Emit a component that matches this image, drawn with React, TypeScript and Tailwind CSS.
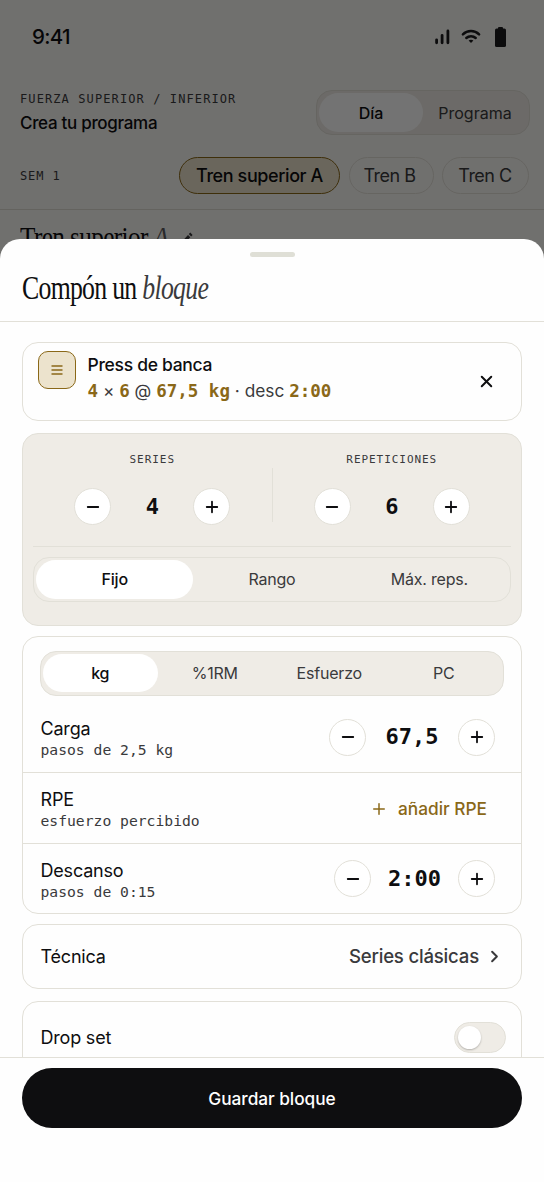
import { clsx } from 'clsx';
import { Minus, Plus, X, ChevronRight } from 'lucide-react';

const mono = "font-['DejaVu_Sans_Mono',monospace]";
const serif = "font-['Liberation_Serif',serif]";

const StatusIcons = () => {
  return (
    <div className="flex items-center">
      <svg width="15" height="16" viewBox="0 0 15 16" stroke="#1c1c1e" strokeWidth="2.8" strokeLinecap="round">
        <path d="M1.6 10.8v3M7.1 6.3v7.5M12.9 2v11.8" />
      </svg>
      <svg className="ml-[11px]" width="20" height="15" viewBox="0 0 20 15" fill="none" stroke="#1c1c1e" strokeWidth="2.5" strokeLinecap="round">
        <path d="M1.9 5.4C6.3 1 13.7 1 18.1 5.4M5.3 9C7.9 6.5 12.1 6.5 14.7 9" />
        <path d="M7.6 11.6c1.4-1.2 3.4-1.2 4.8 0L10 14z" fill="#1c1c1e" stroke="none" />
      </svg>
      <svg className="ml-[14px]" width="11" height="20" viewBox="0 0 11 20" fill="#1c1c1e">
        <rect x="3" width="5" height="4" rx="1" />
        <rect y="1.6" width="11" height="18.4" rx="1.6" />
      </svg>
    </div>
  );
};

interface SegmentedProps {
  items: string[];
  className?: string;
}

const Segmented = ({ items, className }: SegmentedProps) => {
  return (
    <div className={clsx('flex rounded-2xl border border-[#e2e0d8] bg-[#efece6] text-[16px] tracking-[-0.2px]', className)}>
      {items.map((item, i) => (
        <button
          key={item}
          className={clsx(
            'flex-1 rounded-[20px] pb-px',
            i === 0 ? 'bg-white font-medium text-[#0e0e10]' : 'text-[#3a3a3c]'
          )}
        >
          {item}
        </button>
      ))}
    </div>
  );
};

interface StepperProps {
  value: string;
  valueClass: string;
}

const Stepper = ({ value, valueClass }: StepperProps) => {
  const round = 'flex size-[37px] items-center justify-center rounded-full border border-[#e2e0d8] bg-white';
  return (
    <div className="flex items-center">
      <button className={round}>
        <Minus size={18} strokeWidth={2.4} />
      </button>
      <span className={clsx(mono, 'text-center text-[22px] leading-none font-bold', valueClass)}>{value}</span>
      <button className={round}>
        <Plus size={18} strokeWidth={2.4} />
      </button>
    </div>
  );
};

interface RowProps {
  title: string;
  hint: string;
  children: React.ReactNode;
}

const Row = ({ title, hint, children }: RowProps) => {
  return (
    <div className="flex h-[70.5px] items-center justify-between pr-[26px] pl-[17.5px]">
      <div className="pt-[4px]">
        <div className="text-[18px] leading-[22px] tracking-[-0.2px]">{title}</div>
        <div className={clsx(mono, 'text-[14.7px] leading-5 text-[#3a3a3c]')}>{hint}</div>
      </div>
      {children}
    </div>
  );
};

const ProgramHeader = () => {
  const pill = 'flex h-[37px] items-center justify-center rounded-full border text-[18px]';
  return (
    <div className="h-full bg-[#f9f8f4]">
      <div className="flex h-[73px] items-center justify-between pr-[38px] pl-8">
        <span className="pt-px text-[20.5px] font-medium tracking-[-0.7px]">9:41</span>
        <StatusIcons />
      </div>
      <div className="flex items-center justify-between pt-[17px] pr-[14px] pl-5">
        <div>
          <div className={clsx(mono, 'text-[12px] leading-4 tracking-[1.1px] text-[#3a3a3c]')}>
            FUERZA SUPERIOR / INFERIOR
          </div>
          <div className="mt-1 text-[17px] leading-6 font-medium tracking-[-0.3px]">Crea tu programa</div>
        </div>
        <div className="flex h-[45px] w-[214px] rounded-2xl border border-[#e2e0d8] bg-[#efece6] p-[2px] text-[16px]">
          <span className="flex w-[104px] items-center justify-center rounded-[20px] bg-white font-medium">Día</span>
          <span className="flex flex-1 items-center justify-center text-[#3a3a3c]">Programa</span>
        </div>
      </div>
      <div className="flex h-[75px] items-center border-b border-[#dddbd3] pt-[7px] pr-[15px] pl-5">
        <span className={clsx(mono, 'flex-1 text-[12px] tracking-[0.9px] text-[#3a3a3c]')}>SEM 1</span>
        <span className={clsx(pill, 'w-[161px] border-[#8a6818] bg-[#ece3cd] font-medium tracking-[-0.4px]')}>Tren superior A</span>
        <span className={clsx(pill, 'ml-[9px] w-[85px] border-[#e2e0d8] pr-1 tracking-[-0.5px] text-[#3a3a3c]')}>Tren B</span>
        <span className={clsx(pill, 'ml-2 w-[87px] border-[#e2e0d8] pr-px tracking-[-0.5px] text-[#3a3a3c]')}>Tren C</span>
      </div>
      <div className="flex items-start pt-[6px] pl-5">
        <h1 className={clsx(serif, 'w-[162px] origin-left scale-x-[0.87] text-[29px] tracking-[-0.7px] whitespace-nowrap')}>
          Tren superior <em className="text-[#5c5c5e]">A</em>
        </h1>
        <svg className="mt-[15px]" width="11" height="13" viewBox="0 0 11 13" fill="#3a3a3c">
          <path d="M0 10.4 6 3.9l2.3 2.3L2.3 12.7H0zM6.8 3.1 8.3 1.6 10.6 3.9 9.1 5.4z" />
        </svg>
      </div>
    </div>
  );
};

const ExerciseCard = () => {
  const gold = clsx(mono, 'text-[17.5px] font-bold text-[#8a6818]');
  return (
    <section className="flex h-[79px] rounded-2xl border border-[#e2e0d8] pr-[25px] pl-[15px]">
      <div className="mt-2 flex size-[38px] items-center justify-center rounded-[10px] border border-[#8a6818] bg-[#ece3cd]">
        <svg width="12" height="10" viewBox="0 0 12 10" stroke="#8a6818" strokeWidth="1.5">
          <path d="M0.5 1h11M0.5 5h11M0.5 9h11" />
        </svg>
      </div>
      <div className="ml-[11.5px] flex-1 pt-[9px]">
        <div className="text-[17.5px] leading-[26px] font-medium tracking-[-0.3px]">Press de banca</div>
        <div className="flex h-[26px] items-center text-[17.3px] whitespace-pre text-[#3a3a3c]">
          <b className={gold}>4</b> × <b className={gold}>6</b> @ <b className={gold}>67,5 kg</b> · desc{' '}
          <b className={gold}>2:00</b>
        </div>
      </div>
      <button>
        <X size={19} strokeWidth={2.5} />
      </button>
    </section>
  );
};

const VolumeCard = () => {
  const label = clsx(mono, 'text-[11px] leading-4 tracking-[0.95px] text-[#3a3a3c]');
  return (
    <section className="mt-3 h-[193px] rounded-2xl border border-[#e2e0d8] bg-[#efece6] px-[10px]">
      <div className="flex h-[113px] items-start border-b border-[#e2e0d8] pt-[18px]">
        <div className="flex flex-1 flex-col items-center gap-[20px]">
          <span className={label}>SERIES</span>
          <Stepper value="4" valueClass="w-[82px]" />
        </div>
        <div className="mt-4 h-[54px] w-px bg-[#e2e0d8]" />
        <div className="flex flex-1 flex-col items-center gap-[20px]">
          <span className={label}>REPETICIONES</span>
          <Stepper value="6" valueClass="w-[82px]" />
        </div>
      </div>
      <Segmented className="mt-[10px] h-[45px] p-[2px] pb-[2.5px]" items={['Fijo', 'Rango', 'Máx. reps.']} />
    </section>
  );
};

const LoadCard = () => {
  return (
    <section className="mt-[10px] h-[278px] rounded-2xl border border-[#e2e0d8] pt-[14px]">
      <Segmented className="mx-[17px] h-[45px] p-[2px] pb-[3px]" items={['kg', '%1RM', 'Esfuerzo', 'PC']} />
      <div className="mt-[6.5px] divide-y divide-[#e2e0d8]">
        <Row title="Carga" hint="pasos de 2,5 kg">
          <Stepper value="67,5" valueClass="w-[92px]" />
        </Row>
        <Row title="RPE" hint="esfuerzo percibido">
          <button className="flex items-center gap-[10px] pt-[2px] pr-2 text-[17.3px] font-medium text-[#8a6818]">
            <Plus size={18} strokeWidth={2} />
            añadir RPE
          </button>
        </Row>
        <Row title="Descanso" hint="pasos de 0:15">
          <Stepper value="2:00" valueClass="w-[87px]" />
        </Row>
      </div>
    </section>
  );
};

const App = () => {
  return (
    <div className="relative h-[1182px] w-[544px] overflow-hidden font-['Inter',sans-serif] text-[#0e0e10]">
      <ProgramHeader />
      <div className="absolute inset-0 bg-black/55" />
      <div className="absolute inset-x-0 top-[239px] bottom-0 flex flex-col rounded-t-[20px] bg-[#fefefe]">
        <div className="mx-auto mt-[13px] h-[5px] w-[45px] rounded-full bg-[#dfdfd6]" />
        <header className="h-[65px] border-b border-[#e2e0d8] pt-[10px] pl-[22px]">
          <h2 className={clsx(serif, 'origin-left scale-x-[0.78] text-[33px] leading-[42px] tracking-[-0.9px] whitespace-nowrap')}>
            Compón un <em className="text-[#3a3a3c]">bloque</em>
          </h2>
        </header>
        <main className="min-h-0 flex-1 overflow-hidden px-[22px] pt-5">
          <ExerciseCard />
          <VolumeCard />
          <LoadCard />
          <section className="mt-[10px] flex h-[65px] items-center justify-between rounded-2xl border border-[#e2e0d8] pr-[17px] pl-[17.5px] text-[18px] tracking-[-0.2px]">
            <span>Técnica</span>
            <span className="flex items-center gap-[6px] text-[18.6px] font-medium text-[#3a3a3c]">
              Series clásicas
              <ChevronRight size={19} strokeWidth={2.5} />
            </span>
          </section>
          <section className="mt-3 flex h-[72px] items-center justify-between rounded-2xl border border-[#e2e0d8] pr-[15px] pl-[17.5px] text-[18px] tracking-[-0.2px]">
            <span>Drop set</span>
            <span className="flex h-[31px] w-[52px] items-center rounded-full border border-[#e2e0d8] bg-[#efece6] pl-[3px]">
              <span className="size-[23px] rounded-full bg-white shadow-[0_1px_2px_rgba(0,0,0,0.25)]" />
            </span>
          </section>
        </main>
        <footer className="h-[125px] border-t border-[#e2e0d8] px-[22px] pt-[10px]">
          <button className="h-[60px] w-full rounded-full bg-[#0e0e10] pt-[2px] text-[17.3px] font-medium tracking-[-0.05px] text-white">
            Guardar bloque
          </button>
        </footer>
      </div>
    </div>
  );
};

export default App;
